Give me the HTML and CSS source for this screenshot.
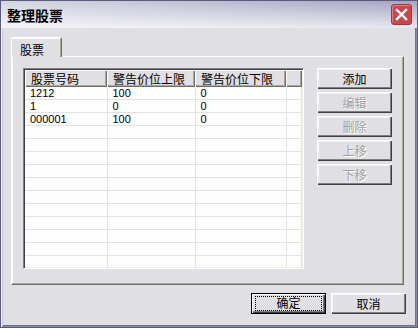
FILE: index.html
```html
<!DOCTYPE html>
<html lang="zh-CN">
<head>
<meta charset="UTF-8">
<title>整理股票</title>
<link rel="stylesheet" href="styles.css">
</head>
<body>
<div class="window">
  <div class="titlebar">
    <span class="title">整理股票</span>
    <div class="close">
      <svg width="13" height="13" viewBox="0 0 13 13">
        <path d="M2 2 L11 11 M11 2 L2 11" stroke="#fff" stroke-width="2.4" stroke-linecap="square"/>
      </svg>
    </div>
  </div>

  <div class="client">
    <div class="tabs">
      <div class="tab">股票</div>
    </div>
    <div class="panel">
      <div class="listview">
        <table class="grid">
          <thead>
            <tr>
              <th class="c1">股票号码</th>
              <th class="c2">警告价位上限</th>
              <th class="c3">警告价位下限</th>
              <th class="c4"></th>
            </tr>
          </thead>
          <tbody id="rows"></tbody>
        </table>
      </div>
      <div class="side-buttons">
        <button class="btn">添加</button>
        <button class="btn" disabled>编辑</button>
        <button class="btn" disabled>删除</button>
        <button class="btn" disabled>上移</button>
        <button class="btn" disabled>下移</button>
      </div>
    </div>
    <div class="footer">
      <button class="btn default"><span class="focus">确定</span></button>
      <button class="btn">取消</button>
    </div>
  </div>
</div>

<script>
  const stocks = [
    ["1212", "100", "0"],
    ["1", "0", "0"],
    ["000001", "100", "0"]
  ];
  const tbody = document.getElementById("rows");
  for (let i = 0; i < 14; i++) {
    const s = stocks[i] || ["", "", ""];
    const tr = document.createElement("tr");
    tr.innerHTML = `<td>${s[0]}</td><td>${s[1]}</td><td>${s[2]}</td><td></td>`;
    tbody.appendChild(tr);
  }
</script>
</body>
</html>
```

FILE: styles.css
```css
body {
margin: 0;
font-family: "Liberation Sans", "Noto Sans CJK SC", sans-serif;
font-size: 12px;
color: #000;
}

.window {
width: 418px;
height: 328px;
box-sizing: border-box;
border: 1px solid #5a5a7a;
background: #e0dfe3;
box-shadow: inset 1px 1px #f4f4f8, inset -1px -1px #8a8aa4, inset 2px 2px #c8c8d8, inset -2px -2px #6e6e8e;
display: flex;
flex-direction: column;
padding: 0 3px 3px 3px;
}

.titlebar {
height: 27px;
margin: 0 -3px;
padding: 0 4px 0 6px;
display: flex;
align-items: center;
justify-content: space-between;
background: linear-gradient(to bottom, rgba(255,255,255,0) 0%, rgba(255,255,255,0.75) 100%),
            linear-gradient(to right, #d6d6e2, #a4a4c2);
}

.title {
font-weight: bold;
font-size: 14px;
}

.close {
width: 19px;
height: 19px;
margin-right: 1px;
border-radius: 3px;
background: #c8484c;
border: 1px solid #a83438;
box-shadow: inset 1px 1px #e08080;
display: flex;
align-items: center;
justify-content: center;
}

.client {
flex: 1;
display: flex;
flex-direction: column;
padding: 9px 8px 0 7px;
}

.tabs {
display: flex;
height: 20px;
}

.tab {
width: 51px;
height: 20px;
box-sizing: border-box;
padding: 3px 0 0 8px;
background: #e0dfe3;
border-top: 1px solid #fff;
border-left: 1px solid #fff;
border-right: 1px solid #716f64;
box-shadow: inset -1px 0 #aca899, inset 0 1px #f8f8f0;
border-radius: 2px 2px 0 0;
position: relative;
z-index: 1;
}

.panel {
width: 393px;
height: 229px;
box-sizing: border-box;
border-top: 1px solid #fff;
border-left: 1px solid #fff;
border-right: 1px solid #716f64;
border-bottom: 1px solid #716f64;
box-shadow: inset -1px -1px #aca899, inset 1px 0 #f8f8f0;
display: flex;
padding: 11px 11px 0 11px;
gap: 13px;
margin-top: -1px;
}

.listview {
width: 281px;
height: 201px;
box-sizing: border-box;
border-top: 1px solid #808080;
border-left: 1px solid #808080;
border-right: 1px solid #fff;
border-bottom: 1px solid #fff;
box-shadow: inset 1px 1px #404040, inset -1px -1px #f0f0e4;
background: #fdfdfd;
padding: 1px;
overflow: hidden;
}

.grid {
border-collapse: collapse;
table-layout: fixed;
width: 277px;
}

.grid th {
height: 17px;
box-sizing: border-box;
padding: 0 0 0 6px;
text-align: left;
font-weight: normal;
background: #e0dfe3;
box-shadow: inset 1px 1px #fff, inset -1px -1px #716f64, inset -2px -2px #aca899;
white-space: nowrap;
}

.grid .c1 { width: 82px; }
.grid .c2 { width: 88px; }
.grid .c3 { width: 91px; }

.grid td {
height: 12px;
padding: 0 0 0 5px;
font-size: 11px;
line-height: 12px;
border-bottom: 1px solid #e2e2e2;
border-right: 1px solid #e2e2e2;
white-space: nowrap;
}

.side-buttons {
display: flex;
flex-direction: column;
gap: 3px;
}

.btn {
width: 75px;
height: 21px;
padding: 0;
font-family: "Liberation Sans", "Noto Sans CJK SC", sans-serif;
font-size: 12px;
color: #000;
background: #e0dfe3;
border: none;
box-shadow: inset 1px 1px #fff, inset -1px -1px #404040, inset -2px -2px #808080, inset 2px 2px #f4f4f0;
}

.btn:disabled {
color: #a0a0a0;
text-shadow: 1px 1px #fff;
}

.footer {
display: flex;
justify-content: flex-end;
gap: 5px;
margin-top: 8px;
}

.btn.default {
outline: 1px solid #000;
outline-offset: -1px;
box-shadow: inset 2px 2px #fff, inset -2px -2px #404040, inset -3px -3px #808080;
display: flex;
align-items: center;
justify-content: center;
}

.focus {
display: block;
width: 67px;
height: 15px;
line-height: 15px;
box-sizing: border-box;
border: 1px dotted #000;
}
```
